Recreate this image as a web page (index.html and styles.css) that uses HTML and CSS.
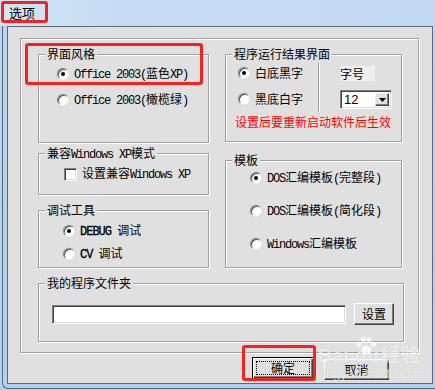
FILE: index.html
```html
<!DOCTYPE html>
<html lang="zh">
<head>
<meta charset="utf-8">
<title>选项</title>
<link rel="stylesheet" href="styles.css">
</head>
<body>
<div class="titlebar"><span class="title">选项</span></div>
<div class="frame">
  <div class="client">
    <div class="panel">
      <div class="cols">
        <div class="col col-left">
          <div class="group g1">
            <span class="legend">界面风格</span>
            <div class="opt r26"><span class="radio on"></span><span><span class="en">Office 2003(</span>蓝色<span class="en">XP)</span></span></div>
            <div class="opt r26"><span class="radio"></span><span><span class="en">Office 2003(</span>橄榄绿<span class="en">)</span></span></div>
          </div>
          <div class="group g2">
            <span class="legend">兼容<span class="en">Windows XP</span>模式</span>
            <div class="opt r24"><span class="check"></span><span>设置兼容<span class="en">Windows XP</span></span></div>
          </div>
          <div class="group g3">
            <span class="legend">调试工具</span>
            <div class="opt r23"><span class="radio on"></span><span><span class="en b">DEBUG </span>调试</span></div>
            <div class="opt r23"><span class="radio"></span><span><span class="en b">CV </span>调试</span></div>
          </div>
        </div>
        <div class="col col-right">
          <div class="group g4">
            <span class="legend">程序运行结果界面</span>
            <div class="rt-top">
              <div class="rt-radios">
                <div class="opt r26"><span class="radio on"></span><span>白底黑字</span></div>
                <div class="opt r26"><span class="radio"></span><span>黑底白字</span></div>
              </div>
              <div class="vsep"></div>
              <div class="rt-size">
                <div class="size-label">字号</div>
                <div class="combo"><span class="combo-val">12</span><span class="combo-btn"><svg width="7" height="4" viewBox="0 0 7 4"><path d="M0 0H7L3.5 4Z" fill="#000"/></svg></span></div>
              </div>
            </div>
            <div class="warn">设置后要重新启动软件后生效</div>
          </div>
          <div class="group g5">
            <span class="legend">模板</span>
            <div class="opt r20"><span class="radio on"></span><span><span class="en">DOS</span>汇编模板<span class="en">(</span>完整段<span class="en">)</span></span></div>
            <div class="opt r20"><span class="radio"></span><span><span class="en">DOS</span>汇编模板<span class="en">(</span>简化段<span class="en">)</span></span></div>
            <div class="opt r20"><span class="radio"></span><span><span class="en">Windows</span>汇编模板</span></div>
          </div>
        </div>
      </div>
      <div class="group g6">
        <span class="legend">我的程序文件夹</span>
        <div class="folder-row">
          <div class="field"></div>
          <button class="btn btn-set">设置</button>
        </div>
      </div>
    </div>
    <div class="actions">
      <button class="btn btn-ok"><span class="focus">确定</span></button>
      <button class="btn btn-cancel">取消</button>
    </div>
  </div>
</div>

<div class="watermark">
  <svg class="paw" width="22" height="20" viewBox="0 0 22 20"><g fill="rgba(255,255,255,0.7)"><circle cx="4" cy="8" r="2.6"/><circle cx="8.5" cy="3.5" r="2.6"/><circle cx="14" cy="3.5" r="2.6"/><circle cx="18.5" cy="8" r="2.6"/><ellipse cx="11" cy="14" rx="5" ry="4.5"/></g></svg>
  <div class="wm-big">Bai<span class="wm-du">du</span>经验</div>
  <div class="wm-small">jingyan.baidu.com</div>
</div>

<div class="mark mark-title"></div>
<div class="mark mark-style"></div>
<div class="mark mark-ok"></div>
</body>
</html>
```
FILE: styles.css
```css
* { box-sizing: border-box; }
html, body { margin: 0; padding: 0; }
body {
  width: 435px;
  height: 390px;
  overflow: hidden;
  position: relative;
  background: linear-gradient(to bottom, #c4dbf2 0, #bcd5ee 30px, #b3cfec 390px);
  font-family: "Noto Sans CJK SC", sans-serif;
  font-size: 12px;
  color: #000;
}
.titlebar {
  height: 26px;
  padding-left: 9px;
  line-height: 25px;
  font-size: 13px;
  background: linear-gradient(to right, #d3e5f6 0, #c6dcf2 120px, #c2daf1 435px);
}
.frame {
  margin-left: 2px;
  width: 433px;
  height: 363px;
  padding: 0 0 4px 4px;
  border-left: 1px solid #56667a;
  border-bottom: 1px solid #56667a;
  border-bottom-left-radius: 6px;
}
.client {
  width: 426px;
  height: 358px;
  border: 1px solid #5b6878;
  background: #e0e0e0;
  padding: 11px 0 0 12px;
}
.panel {
  width: 399px;
  height: 315px;
  border: 1px solid #a0a0a0;
  box-shadow: 1px 1px 0 #fff, inset 1px 1px 0 #fff;
  padding: 15px 0 0 17px;
}
.cols { display: flex; gap: 16px; height: 214px; }
.col { display: flex; flex-direction: column; }
.col-left { width: 171px; }
.col-right { width: 177px; }

.group {
  position: relative;
  border: 1px solid #a0a0a0;
  box-shadow: 1px 1px 0 #fff, inset 1px 1px 0 #fff;
}
.legend {
  position: absolute;
  top: -8px;
  left: 6px;
  padding: 0 2px;
  line-height: 14px;
  background: #e0e0e0;
  white-space: nowrap;
}
.en {
  font-family: "Liberation Mono", monospace;
  font-size: 12px;
  letter-spacing: -1.2px;
  white-space: pre;
}
.en.b { letter-spacing: -1px; -webkit-text-stroke: 0.3px #000; }

.opt { display: flex; align-items: center; gap: 5px; white-space: nowrap; line-height: 14px; }
.r26 { height: 26px; }
.r24 { height: 24px; }
.r23 { height: 23px; }
.r20 { height: 20px; }

.radio {
  position: relative;
  flex: none;
  width: 12px;
  height: 12px;
  border-radius: 50%;
  background: #fff;
  border: 1px solid;
  border-color: #8a8a8a #f4f4f4 #f4f4f4 #8a8a8a;
  box-shadow: inset 1px 1px 0 #505050, 0 0 0 0.5px #c8c8c8;
}
.radio.on::after {
  content: "";
  position: absolute;
  left: 3px;
  top: 3px;
  width: 4px;
  height: 4px;
  border-radius: 50%;
  background: #000;
}
.check {
  flex: none;
  width: 13px;
  height: 13px;
  background: #fff;
  border: 1px solid;
  border-color: #808080 #fff #fff #808080;
  box-shadow: inset 1px 1px 0 #404040, inset -1px -1px 0 #dcdcdc;
}

.g1 { height: 89px; margin-bottom: 10px; padding: 6px 0 0 18px; }
.g2 { height: 42px; margin-bottom: 15px; padding: 8px 0 0 25px; }
.g3 { height: 58px; padding: 8px 0 0 24px; }
.g4 { height: 88px; margin-bottom: 18px; padding: 5px 0 0 12px; }
.g5 { height: 108px; padding: 7px 0 0 24px; display: flex; flex-direction: column; gap: 13px; }
.g6 { width: 366px; height: 59px; margin-top: 15px; padding: 19px 0 0 13px; }

.rt-top { display: flex; height: 52px; }
.rt-radios { width: 80px; display: flex; flex-direction: column; }
.vsep {
  width: 2px;
  height: 49px;
  margin-top: 3px;
  border-left: 1px solid #a0a0a0;
  border-right: 1px solid #fff;
}
.rt-size { margin-left: 20px; padding-top: 6px; }
.size-label {
  width: 35px;
  height: 15px;
  line-height: 15px;
  background: #eeeeee;
}
.combo {
  margin-top: 9px;
  width: 52px;
  height: 19px;
  display: flex;
  align-items: center;
  justify-content: space-between;
  background: #fff;
  border: 1px solid;
  border-color: #808080 #fff #fff #808080;
  box-shadow: inset 1px 1px 0 #404040, inset -1px -1px 0 #dcdcdc;
  padding: 0 2px 0 3px;
}
.combo-val { font-family: "Liberation Sans", sans-serif; font-size: 13px; line-height: 15px; }
.combo-btn {
  width: 14px;
  height: 13px;
  display: flex;
  align-items: center;
  justify-content: center;
  background: #e0e0e0;
  border: 1px solid;
  border-color: #f0f0f0 #404040 #404040 #f0f0f0;
  box-shadow: inset -1px -1px 0 #808080;
}
.warn {
  margin: 2px 0 0 -3px;
  line-height: 16px;
  color: #ff0000;
  white-space: nowrap;
}

.folder-row { display: flex; align-items: center; gap: 8px; }
.field {
  width: 294px;
  height: 19px;
  background: #fff;
  border: 1px solid;
  border-color: #808080 #fff #fff #808080;
  box-shadow: inset 1px 1px 0 #404040, inset -1px -1px 0 #dcdcdc;
}
.btn {
  font-family: "Noto Sans CJK SC", sans-serif;
  font-size: 12px;
  color: #000;
  padding: 0;
  background: #e0e0e0;
  border: 1px solid;
  border-color: #fff #404040 #404040 #fff;
  box-shadow: inset -1px -1px 0 #808080;
  line-height: 14px;
}
.btn-set { width: 40px; height: 22px; }

.actions {
  display: flex;
  justify-content: flex-end;
  align-items: flex-start;
  gap: 10px;
  margin-top: 4px;
  padding-right: 43px;
}
.btn-ok {
  width: 62px;
  height: 22px;
  border: 1px solid #000;
  box-shadow: inset 1px 1px 0 #fff, inset -1px -1px 0 #404040, inset -2px -2px 0 #808080;
  padding: 3px;
}
.focus {
  display: flex;
  align-items: center;
  justify-content: center;
  width: 100%;
  height: 100%;
  border: 1px dotted #000;
}
.btn-cancel { width: 65px; height: 21px; margin-top: 2px; }

.watermark {
  position: absolute;
  left: 318px;
  top: 336px;
  color: rgba(255, 255, 255, 0.7);
  text-shadow: 0 0 1px rgba(120, 120, 120, 0.3);
  font-family: "Liberation Sans", "Noto Sans CJK SC", sans-serif;
  pointer-events: none;
}
.paw { position: absolute; left: 37px; top: 0; }
.wm-big { margin-top: 10px; font-size: 19px; font-weight: bold; line-height: 19px; white-space: nowrap; letter-spacing: 0.5px; }
.wm-du { margin: 0 2px 0 6px; }
.wm-small { margin-top: 2px; font-size: 13px; line-height: 13px; margin-left: 2px; white-space: nowrap; }

.mark {
  position: absolute;
  border: 3px solid #f4231f;
  border-radius: 3px;
}
.mark-title { left: 1px; top: 1px; width: 47px; height: 22px; }
.mark-style { left: 25px; top: 43px; width: 178px; height: 42px; }
.mark-ok { left: 242px; top: 345px; width: 74px; height: 36px; }
```
